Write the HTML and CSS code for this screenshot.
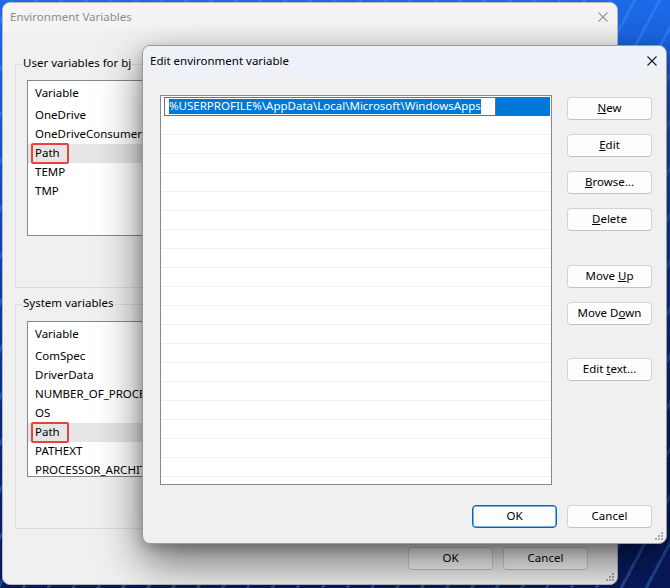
FILE: index.html
```html
<!DOCTYPE html>
<html lang="en">
<head>
<meta charset="utf-8">
<title>Environment Variables</title>
<link rel="stylesheet" href="styles.css">
</head>
<body>
<div class="desktop">
  <section class="win outer">
    <header class="titlebar inactive">
      <span class="title">Environment Variables</span>
      <svg class="close" width="10" height="10" viewBox="0 0 10 10"><path d="M0.5 0.5L9.5 9.5M9.5 0.5L0.5 9.5" stroke="#9a9a9a" stroke-width="1.1" fill="none"/></svg>
    </header>
    <div class="outer-body">
      <div class="group g-user">
        <span class="group-label">User variables for bj</span>
        <div class="lv">
          <div class="lv-head">Variable</div>
          <div class="lv-row">OneDrive</div>
          <div class="lv-row">OneDriveConsumer</div>
          <div class="lv-row hl"><span class="mark">Path</span></div>
          <div class="lv-row">TEMP</div>
          <div class="lv-row">TMP</div>
        </div>
      </div>
      <div class="group g-sys">
        <span class="group-label">System variables</span>
        <div class="lv">
          <div class="lv-head">Variable</div>
          <div class="lv-row">ComSpec</div>
          <div class="lv-row">DriverData</div>
          <div class="lv-row">NUMBER_OF_PROCESSORS</div>
          <div class="lv-row">OS</div>
          <div class="lv-row hl"><span class="mark">Path</span></div>
          <div class="lv-row">PATHEXT</div>
          <div class="lv-row">PROCESSOR_ARCHITECTURE</div>
        </div>
      </div>
      <div class="btn-row outer-btns">
        <button class="btn">OK</button>
        <button class="btn">Cancel</button>
      </div>
    </div>
    <svg class="grip" width="8" height="8" viewBox="0 0 8 8"><g fill="#a8a8a8"><rect x="6" y="0" width="2" height="2"/><rect x="3" y="3" width="2" height="2"/><rect x="6" y="3" width="2" height="2"/><rect x="0" y="6" width="2" height="2"/><rect x="3" y="6" width="2" height="2"/><rect x="6" y="6" width="2" height="2"/></g></svg>
  </section>

  <section class="win dlg">
    <header class="titlebar active">
      <span class="title">Edit environment variable</span>
      <svg class="close" width="10" height="10" viewBox="0 0 10 10"><path d="M0.5 0.5L9.5 9.5M9.5 0.5L0.5 9.5" stroke="#1a1a1a" stroke-width="1.1" fill="none"/></svg>
    </header>
    <div class="dlg-body">
      <div class="dlg-main">
        <div class="pathlist">
          <div class="pl-row sel">
            <div class="edit"><span class="seltext">%USERPROFILE%\AppData\Local\Microsoft\WindowsApps</span></div>
            <div class="selfill"></div>
          </div>
          <div class="pl-row"></div><div class="pl-row"></div><div class="pl-row"></div><div class="pl-row"></div>
          <div class="pl-row"></div><div class="pl-row"></div><div class="pl-row"></div><div class="pl-row"></div>
          <div class="pl-row"></div><div class="pl-row"></div><div class="pl-row"></div><div class="pl-row"></div>
          <div class="pl-row"></div><div class="pl-row"></div><div class="pl-row"></div><div class="pl-row"></div>
          <div class="pl-row"></div><div class="pl-row"></div><div class="pl-row"></div><div class="pl-row"></div>
        </div>
        <div class="side-btns">
          <button class="btn b-first"><u>N</u>ew</button>
          <button class="btn"><u>E</u>dit</button>
          <button class="btn"><u>B</u>rowse...</button>
          <button class="btn"><u>D</u>elete</button>
          <button class="btn b-up">Move <u>U</u>p</button>
          <button class="btn">Move D<u>o</u>wn</button>
          <button class="btn b-text">Edit <u>t</u>ext...</button>
        </div>
      </div>
      <div class="btn-row dlg-foot">
        <button class="btn default">OK</button>
        <button class="btn">Cancel</button>
      </div>
    </div>
    <svg class="grip" width="8" height="8" viewBox="0 0 8 8"><g fill="#a8a8a8"><rect x="6" y="0" width="2" height="2"/><rect x="3" y="3" width="2" height="2"/><rect x="6" y="3" width="2" height="2"/><rect x="0" y="6" width="2" height="2"/><rect x="3" y="6" width="2" height="2"/><rect x="6" y="6" width="2" height="2"/></g></svg>
  </section>
</div>
</body>
</html>
```
FILE: styles.css
```css
html, body {
  margin: 0;
  padding: 0;
}
body {
  width: 670px;
  height: 588px;
  overflow: hidden;
  font-family: "Noto Sans", "Open Sans", sans-serif;
  font-size: 11.5px;
  color: #000;
}
.desktop {
  position: relative;
  width: 670px;
  height: 588px;
  overflow: hidden;
  background:
    repeating-linear-gradient(118deg, rgba(0,0,0,0) 0 9px, rgba(70,150,255,0.35) 9px 12px, rgba(0,0,0,0) 12px 22px),
    linear-gradient(180deg, #1d6ae8 0%, #1656d2 20%, #0f3aa6 50%, #0a2378 78%, #081a5a 100%);
}

/* windows on the desktop */
.win {
  position: absolute;
  box-sizing: border-box;
  border-radius: 8px;
  background: #f0f0f0;
  display: flex;
  flex-direction: column;
  overflow: hidden;
}
.outer {
  left: 2px;
  top: 2px;
  width: 616px;
  height: 583px;
  border: 1px solid #b9b9b9;
}
.dlg {
  left: 142px;
  top: 45px;
  width: 525px;
  height: 499px;
  border: 1px solid #9a9a9a;
  overflow: visible;
  box-shadow: 0 18px 44px rgba(0,0,0,0.55), 0 4px 12px rgba(0,0,0,0.2);
}

.titlebar {
  display: flex;
  align-items: center;
  justify-content: space-between;
  flex: none;
}
.titlebar .title {
  margin-top: -2px;
}
.titlebar.inactive {
  height: 28px;
  padding: 0 9px 0 7px;
  background: #f4f4f4;
  color: #8c8c8c;
}
.titlebar.active {
  height: 30px;
  padding: 0 9px 0 7px;
  background: #eef2f8;
  border-radius: 8px 8px 0 0;
  color: #000;
}
.close {
  display: block;
}

/* outer window body */
.outer-body {
  display: flex;
  flex-direction: column;
  padding: 0 14px 0 12px;
}
.group {
  border: 1px solid #dcdcdc;
  display: flex;
  flex-direction: column;
  align-items: flex-start;
  padding: 0 11px 51px 11px;
}
.g-user { margin-top: 33px; }
.g-sys { margin-top: 16px; }
.group-label {
  display: block;
  margin: -10px 0 0 -5px;
  padding: 0 1px 1px;
  line-height: 16px;
  background: #f0f0f0;
}
.lv {
  box-sizing: border-box;
  align-self: stretch;
  height: 156px;
  background: #fff;
  border: 1px solid #828790;
  overflow: hidden;
}
.g-user .lv { margin-top: 8px; }
.g-sys .lv { margin-top: 9px; }
.lv-head {
  height: 25px;
  line-height: 23px;
  padding-left: 7px;
}
.lv-row {
  box-sizing: border-box;
  height: 19px;
  display: flex;
  align-items: center;
  padding: 0 0 2px 7px;
  white-space: nowrap;
}
.lv-row.hl { background: #e6e6e6; }
.mark {
  display: inline-block;
  box-sizing: border-box;
  height: 21px;
  line-height: 15px;
  margin: 2px 0 0 -4px;
  padding: 0 7px 2px 2px;
  border: 2px solid #e3453a;
  border-radius: 2px;
}

.btn-row {
  display: flex;
  justify-content: flex-end;
  gap: 10px;
}
.outer-btns {
  margin-top: 18px;
  margin-right: 15px;
}

/* buttons */
.btn {
  box-sizing: border-box;
  width: 85px;
  height: 23px;
  padding: 0 0 2px;
  border: 1px solid #d3d3d3;
  border-bottom-color: #c2c2c2;
  border-radius: 4px;
  background: #fdfdfd;
  font: inherit;
  color: #000;
  line-height: 18px;
  text-align: center;
}
.btn u { text-underline-offset: 1px; }
.btn.default {
  border: 1px solid #0067c0;
  box-shadow: inset 0 0 0 0.5px #0067c0;
}

/* dialog body */
.dlg-body {
  display: flex;
  flex-direction: column;
  padding: 19px 14px 0 17px;
}
.dlg-main {
  display: flex;
  gap: 15px;
}
.pathlist {
  box-sizing: border-box;
  width: 392px;
  height: 390px;
  border: 1px solid #828790;
  background: #fff;
  padding: 1px 0 0;
  overflow: hidden;
}
.pl-row {
  box-sizing: border-box;
  height: 19px;
  margin: 0 1px;
  border-bottom: 1px solid #efefef;
}
.pl-row.sel {
  display: flex;
  border-bottom: none;
  margin: 0 1px 0 0;
}
.edit {
  box-sizing: border-box;
  flex: none;
  width: 332px;
  height: 19px;
  margin-left: 3px;
  border: 1px solid #707070;
  background: #fff;
  padding: 1px 0 0 4px;
  display: flex;
  align-items: flex-start;
  white-space: nowrap;
}
.seltext {
  display: block;
  height: 15px;
  line-height: 14px;
  background: #0078d7;
  color: #fff;
}
.selfill {
  flex: 1;
  background: #0078d7;
}
.side-btns {
  display: flex;
  flex-direction: column;
  gap: 14px;
}
.b-first { margin-top: 2px; }
.b-up { margin-top: 20px; }
.b-text { margin-top: 19px; }
.dlg-foot {
  margin-top: 20px;
}

.grip {
  position: absolute;
  right: 3px;
  bottom: 3px;
}
```
